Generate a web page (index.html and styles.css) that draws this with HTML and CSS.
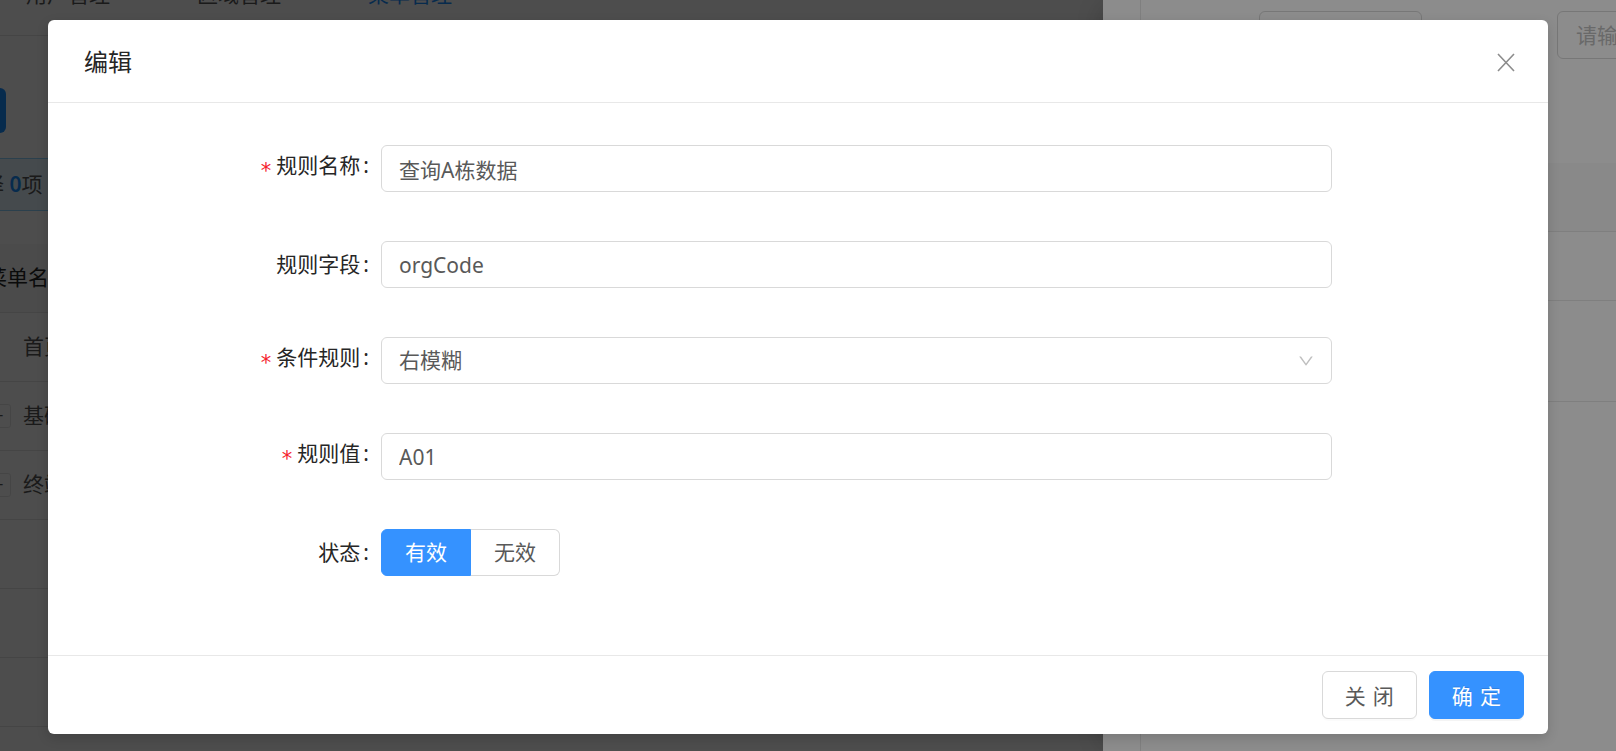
FILE: index.html
```html
<!DOCTYPE html>
<html lang="zh-CN">

<head>
    <meta charset="UTF-8">
    <meta name="viewport" content="width=device-width, initial-scale=1.0">
    <title>菜单管理 - 编辑规则</title>
    <link rel="stylesheet" href="styles.css">
</head>

<body>

    <!-- page behind the drawer -->
    <div class="page">
        <div class="tabs">
            <span class="tab">用户管理</span>
            <span class="tab">区域管理</span>
            <span class="tab tab-active">菜单管理</span>
        </div>

        <div class="page-body">
            <div class="toolbar">
                <span class="btn-add">新增</span>
            </div>

            <div class="alert">已选择 <b>0</b>项</div>

            <div class="table">
                <div class="table-row table-head"><span class="cell">菜单名称</span></div>
                <div class="table-row"><span class="expand expand-empty"></span><span class="cell">首页</span></div>
                <div class="table-row"><span class="expand">+</span><span class="cell">基础数据</span></div>
                <div class="table-row"><span class="expand">+</span><span class="cell">终端管理</span></div>
                <div class="table-row"></div>
                <div class="table-row"></div>
                <div class="table-row"></div>
            </div>
        </div>
    </div>

    <div class="drawer-mask"></div>

    <div class="drawer">
        <div class="drawer-side"></div>
        <div class="drawer-main">
            <div class="search">
                <div class="search-input"></div>
                <div class="search-input search-input-wide">请输入规则名称</div>
            </div>
            <div class="rule-table">
                <div class="rule-head"></div>
                <div class="rule-row"></div>
                <div class="rule-row rule-row-tall"></div>
            </div>
        </div>
    </div>

    <div class="modal-mask"></div>

    <div class="modal">
        <div class="modal-header">
            <div class="modal-title">编辑</div>
            <span class="modal-close">
                <svg width="18" height="19" viewBox="0 0 18 19">
                    <path d="M1 1 L17 18 M17 1 L1 18" stroke="#8c8c8c" stroke-width="1.6" fill="none" />
                </svg>
            </span>
        </div>

        <div class="modal-body">
            <div class="form-item">
                <label class="form-label"><span class="required">*</span>规则名称<span class="colon">:</span></label>
                <input class="input" type="text" value="查询A栋数据">
            </div>

            <div class="form-item">
                <label class="form-label">规则字段<span class="colon">:</span></label>
                <input class="input" type="text" value="orgCode">
            </div>

            <div class="form-item">
                <label class="form-label"><span class="required">*</span>条件规则<span class="colon">:</span></label>
                <div class="input select">
                    <span>右模糊</span>
                    <svg class="select-arrow" width="18" height="18" viewBox="0 0 1024 1024">
                        <path fill="#bfbfbf" d="M884 256h-75c-5.1 0-9.9 2.5-12.9 6.6L512 654.2 227.9 262.6c-3-4.1-7.8-6.6-12.9-6.6h-75c-6.5 0-10.3 7.4-6.5 12.7l352.6 486.1c12.8 17.6 39 17.6 51.7 0l352.6-486.1c3.9-5.3.1-12.7-6.4-12.7z" />
                    </svg>
                </div>
            </div>

            <div class="form-item">
                <label class="form-label"><span class="required">*</span>规则值<span class="colon">:</span></label>
                <input class="input" type="text" value="A01">
            </div>

            <div class="form-item">
                <label class="form-label">状态<span class="colon">:</span></label>
                <div class="radio-group">
                    <span class="radio-btn radio-checked">有效</span>
                    <span class="radio-btn">无效</span>
                </div>
            </div>
        </div>

        <div class="modal-footer">
            <button class="btn"><span>关闭</span></button>
            <button class="btn btn-primary"><span>确定</span></button>
        </div>
    </div>

</body>

</html>
```

FILE: styles.css
```css
* {
    margin: 0;
    padding: 0;
    box-sizing: border-box;
    font-family: "Noto Sans", "Noto Sans CJK SC", sans-serif;
}

body {
    position: relative;
    width: 1616px;
    height: 751px;
    overflow: hidden;
    background: #fff;
    font-size: 21px;
    line-height: 1.5;
    color: #595959;
}

/* ---------- page behind ---------- */

.page {
    width: 1616px;
}

.tabs {
    display: flex;
    gap: 87px;
    height: 36px;
    padding-left: 26px;
    border-bottom: 1px solid #e8e8e8;
}

.tab {
    margin-top: -21px;
    line-height: 30px;
    color: #595959;
}

.tab-active {
    color: #1890ff;
}

.page-body {
    margin-left: -75px;
}

.toolbar {
    padding-top: 52px;
}

.btn-add {
    display: block;
    width: 81px;
    height: 45px;
    line-height: 45px;
    text-align: center;
    background: #1890ff;
    border-radius: 6px;
    color: #fff;
}

.alert {
    margin-top: 25px;
    height: 53px;
    line-height: 51px;
    padding-left: 15px;
    background: #e6f7ff;
    border: 1px solid #91d5ff;
    border-radius: 6px;
}

.alert b {
    font-weight: 600;
    color: #1890ff;
}

.table {
    margin-top: 33px;
}

.table-row {
    display: flex;
    align-items: center;
    height: 69px;
    border-bottom: 1px solid #e8e8e8;
    padding-left: 61px;
}

.table-head {
    background: #fafafa;
    color: #262626;
}

.expand {
    width: 25px;
    height: 24px;
    margin-right: 12px;
    border: 1px solid #e8e8e8;
    border-radius: 3px;
    background: #fff;
    line-height: 21px;
    text-align: center;
    font-size: 18px;
}

.expand-empty {
    visibility: hidden;
}

/* ---------- drawer ---------- */

.drawer-mask {
    position: absolute;
    inset: 0;
    background: rgba(0, 0, 0, 0.45);
}

.drawer {
    position: absolute;
    top: 0;
    left: 1103px;
    width: 513px;
    height: 751px;
    display: flex;
    background: #fff;
    overflow: hidden;
    box-shadow: -9px 0 24px -10px rgba(0, 0, 0, 0.25);
}

.drawer-side {
    flex: none;
    width: 38px;
    border-right: 1px solid #e8e8e8;
}

.drawer-main {
    flex: none;
    width: 475px;
    padding-top: 11px;
}

.search {
    display: flex;
    padding-left: 118px;
}

.search-input {
    flex: none;
    width: 163px;
    height: 48px;
    border: 1px solid #d9d9d9;
    border-radius: 6px;
    padding-left: 18px;
    line-height: 46px;
    color: #bfbfbf;
    white-space: nowrap;
    overflow: hidden;
}

.search-input-wide {
    width: 220px;
    margin-left: 135px;
}

.rule-table {
    margin-top: 104px;
}

.rule-head {
    height: 69px;
    background: #fafafa;
    border-bottom: 1px solid #e8e8e8;
}

.rule-row {
    height: 69px;
    border-bottom: 1px solid #e8e8e8;
}

.rule-row-tall {
    height: 101px;
}

/* ---------- modal ---------- */

.modal-mask {
    position: absolute;
    inset: 0;
    background: rgba(0, 0, 0, 0.45);
}

.modal {
    position: absolute;
    top: 20px;
    left: 48px;
    width: 1500px;
    background: #fff;
    border-radius: 6px;
    box-shadow: 0 4px 12px rgba(0, 0, 0, 0.15);
}

.modal-header {
    position: relative;
    padding: 25px 36px 24px;
    border-bottom: 1px solid #e8e8e8;
}

.modal-title {
    font-size: 24px;
    line-height: 33px;
    color: #262626;
}

.modal-close {
    position: absolute;
    top: 0;
    right: 0;
    width: 84px;
    height: 84px;
    display: flex;
    align-items: center;
    justify-content: center;
}

.modal-body {
    padding: 42px 0 79px;
}

.form-item {
    display: flex;
    align-items: center;
    height: 47px;
    margin-bottom: 49px;
}

.form-item:last-child {
    margin-bottom: 0;
}

.form-label {
    width: 333px;
    text-align: right;
    color: #262626;
    line-height: 47px;
    white-space: nowrap;
}

.required {
    margin-right: 5px;
    font-family: "DejaVu Sans", sans-serif;
    color: #f5222d;
    vertical-align: -5px;
}

.colon {
    margin: 0 12px 0 3px;
}

.input {
    width: 951px;
    height: 47px;
    padding: 0 17px;
    border: 1px solid #d9d9d9;
    border-radius: 6px;
    font: inherit;
    font-family: "Noto Sans", "Noto Sans CJK SC", sans-serif;
    color: #595959;
    background: #fff;
    outline: none;
}

.select {
    display: flex;
    align-items: center;
    justify-content: space-between;
    padding-right: 16px;
}

.select-arrow {
    display: block;
}

.radio-group {
    display: flex;
}

.radio-btn {
    height: 47px;
    padding: 0 23px;
    line-height: 45px;
    border: 1px solid #d9d9d9;
    border-left: none;
    border-radius: 0 6px 6px 0;
    color: #595959;
}

.radio-checked {
    background: #3592ff;
    border: 1px solid #3592ff;
    border-radius: 6px 0 0 6px;
    color: #fff;
}

.modal-footer {
    display: flex;
    justify-content: flex-end;
    gap: 12px;
    padding: 15px 24px;
    border-top: 1px solid #e8e8e8;
}

.btn {
    height: 48px;
    padding: 0 22px;
    border: 1px solid #d9d9d9;
    border-radius: 6px;
    background: #fff;
    font-size: 21px;
    color: #595959;
    letter-spacing: 0.34em;
    white-space: nowrap;
    box-shadow: 0 2px 0 rgba(0, 0, 0, 0.015);
    cursor: pointer;
}

.btn span {
    margin-right: -0.34em;
}

.btn-primary {
    background: #3592ff;
    border-color: #3592ff;
    color: #fff;
    text-shadow: 0 -1px 0 rgba(0, 0, 0, 0.12);
    box-shadow: 0 2px 0 rgba(0, 0, 0, 0.045);
}
```
